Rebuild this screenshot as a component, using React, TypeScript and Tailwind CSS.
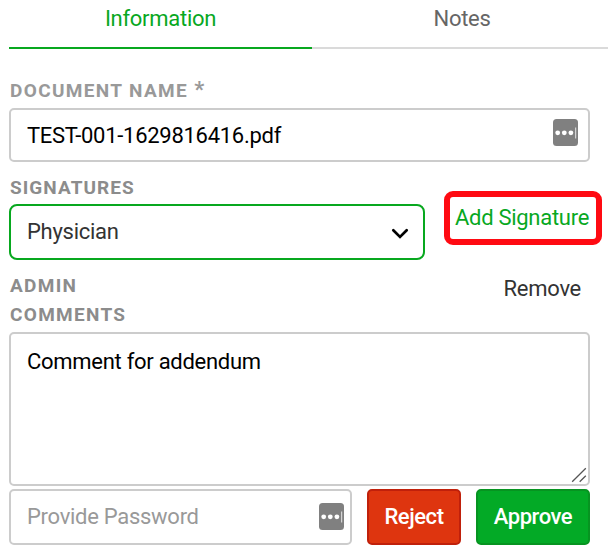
import { useState } from "react"

interface KeyBadgeProps {
  className: string
}

// Password manager badge shown inside the inputs
const KeyBadge = ({ className }: KeyBadgeProps) => (
  <svg className={`absolute ${className}`} width="25" height="27" viewBox="0 0 25 27">
    <rect width="25" height="27" rx="3.5" fill="#808080" />
    <circle cx="4.7" cy="13.8" r="2.4" fill="#fff" />
    <circle cx="11.3" cy="13.8" r="2.4" fill="#fff" />
    <circle cx="17.9" cy="13.8" r="2.4" fill="#fff" />
    <rect x="22" y="8.5" width="1.2" height="11" fill="#d4d4d4" />
  </svg>
)

const labelClass = "block pl-px text-[19px] font-bold leading-[28.5px] text-[#8c8c8c]"

const App = () => {
  const [tab, setTab] = useState<"information" | "notes">("information")
  const [documentName, setDocumentName] = useState("TEST-001-1629816416.pdf")
  const [comments, setComments] = useState("Comment for addendum")
  const [password, setPassword] = useState("")

  const tabClass = (active: boolean) =>
    active
      ? "h-[49px] shrink-0 border-b-2 border-[#08a81f] pb-[10px] text-[#08a81f]"
      : "h-[49px] shrink-0 border-b-2 border-[#dadada] pb-[10px] text-[#666666]"

  return (
    <div className="h-[554px] w-[608px] overflow-hidden bg-white pl-[9px] font-['Roboto',sans-serif] text-[22px] leading-7 tracking-[-0.28px] text-black">
      <div className="grid grid-cols-[303px_300px]">
        <button className={tabClass(tab === "information")} onClick={() => setTab("information")}>
          Information
        </button>
        <button className={tabClass(tab === "notes")} onClick={() => setTab("notes")}>
          Notes
        </button>
      </div>

      <div className="w-[581px] pt-[28px]">
        <label className="block pl-px text-[19px] font-bold leading-7 tracking-[1.35px] text-[#999999]">
          DOCUMENT NAME <span className="inline-block text-[22px] leading-5">*</span>
        </label>
        <div className="relative mt-[3px]">
          <input
            className="block h-[54px] w-full rounded-[5px] border-2 border-[#cccccc] px-4 outline-none"
            value={documentName}
            onChange={(e) => setDocumentName(e.target.value)}
          />
          <KeyBadge className="right-3 top-[11px]" />
        </div>
      </div>

      <div className="flex items-start">
        <div className="w-[416px] pt-[12px]">
          <label className={`${labelClass} tracking-[1.05px]`}>SIGNATURES</label>
          <button className="mt-[1.5px] flex h-14 w-full items-center justify-between rounded-lg border-2 border-[#08a81f] pl-4 pr-[14px] text-[#333333]">
            <span>Physician</span>
            <svg className="mt-1" width="18" height="12" viewBox="0 0 18 12" fill="none">
              <path d="M2.3 2.2 9 8.9l6.7-6.7" stroke="#000" strokeWidth="2.7" strokeLinecap="round" />
            </svg>
          </button>
        </div>
        <button className="ml-[19px] mt-[29px] h-[54px] w-[158px] shrink-0 whitespace-nowrap rounded-[9px] border-[6px] border-[#ff0a12] pb-[1px] pr-[2px] text-[#08a81f]">
          Add Signature
        </button>
      </div>

      <div className="flex w-[581px] items-start justify-between pt-[12px]">
        <label className={`${labelClass} tracking-[1.3px]`}>
          ADMIN
          <br />
          COMMENTS
        </label>
        <button className="mr-[9px] mt-[3px] text-[#333333]">Remove</button>
      </div>

      <div className="relative mt-[3px] w-[581px]">
        <textarea
          className="block h-[154px] w-full resize-none rounded-[5px] border-2 border-[#cccccc] px-4 py-[14px] outline-none"
          value={comments}
          onChange={(e) => setComments(e.target.value)}
        />
        <svg
          className="pointer-events-none absolute bottom-[3px] right-[3px]"
          width="16"
          height="16"
          viewBox="0 0 16 16"
          stroke="#555"
          strokeWidth="1.3"
        >
          <path d="M1.2 14.8 14.8 1.2M8.7 14.8l6.1-6.1" />
        </svg>
      </div>

      <div className="mt-[3px] flex w-[581px] gap-[15px]">
        <div className="relative w-[343px]">
          <input
            type="password"
            className="block h-14 w-full rounded-[5px] border-2 border-[#cccccc] px-4 pb-[2px] outline-none placeholder:text-[#999999]"
            placeholder="Provide Password"
            value={password}
            onChange={(e) => setPassword(e.target.value)}
          />
          <KeyBadge className="right-2 top-[14px]" />
        </div>
        <button className="h-14 w-[94px] rounded-[5px] border-2 border-[#c0200b] bg-[#de350f] font-medium tracking-[-0.45px] text-white">
          Reject
        </button>
        <button className="h-14 w-[114px] rounded-[5px] border-2 border-[#079421] bg-[#03aa26] font-medium tracking-[-0.45px] text-white">
          Approve
        </button>
      </div>
    </div>
  )
}

export default App
